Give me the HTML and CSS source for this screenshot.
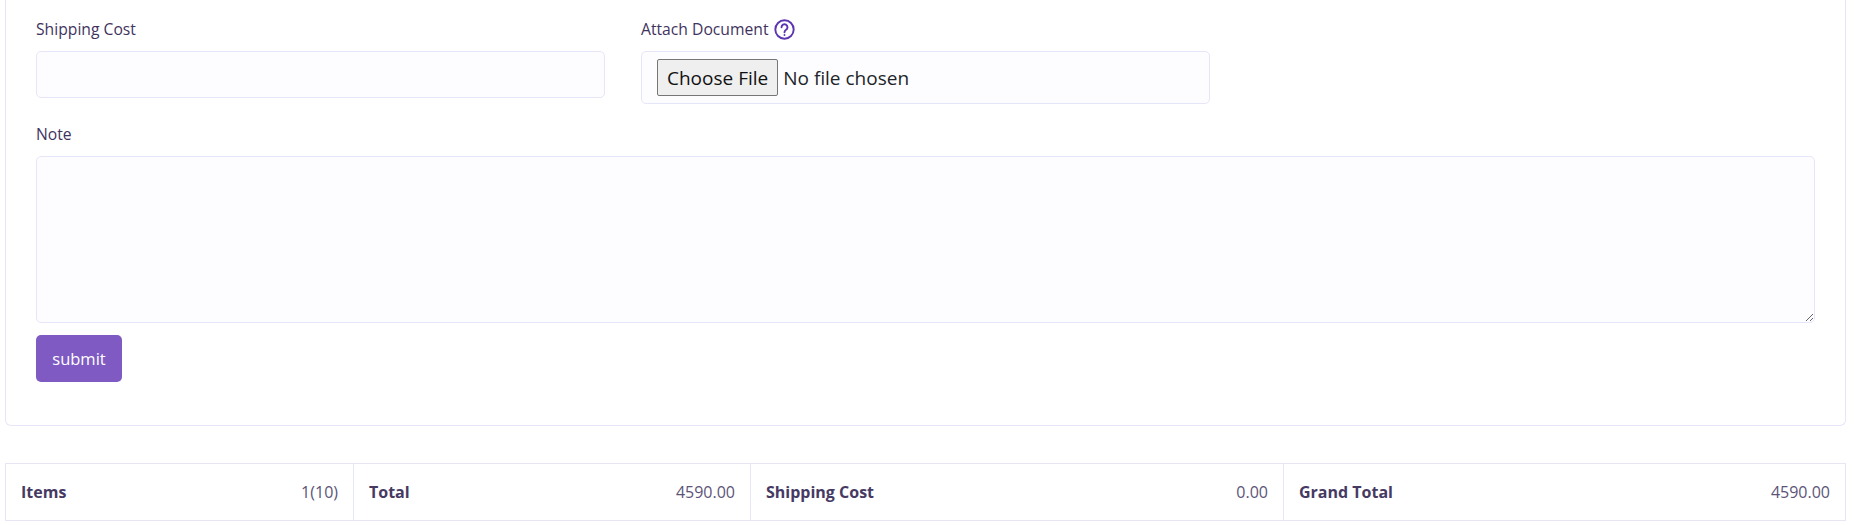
FILE: index.html
```html
<!DOCTYPE html>
<html lang="en">
<head>
<meta charset="UTF-8">
<title>Purchase</title>
<link rel="stylesheet" href="styles.css">
</head>
<body>
  <form class="card">
    <div class="field-row">
      <div class="field">
        <label class="field-label">Shipping Cost</label>
        <input type="text" class="control">
      </div>
      <div class="field">
        <label class="field-label">Attach Document
          <svg class="help-icon" viewBox="0 0 24 24" fill="none" stroke="currentColor" stroke-width="2.2" stroke-linecap="round">
            <circle cx="12" cy="12" r="10.5"/>
            <path d="M8.6 9.4a3.4 3.4 0 1 1 5.2 2.9c-1.2.8-1.8 1.5-1.8 2.9"/>
            <path d="M12 18.2v.1"/>
          </svg>
        </label>
        <div class="file-box"><input type="file" class="file-input"></div>
      </div>
    </div>
    <div class="field">
      <label class="field-label">Note</label>
      <textarea class="control note"></textarea>
    </div>
    <button type="button" class="submit-btn">submit</button>
  </form>

  <div class="totals">
    <div class="cell cell-items"><strong>Items</strong><span>1(10)</span></div>
    <div class="cell cell-total"><strong>Total</strong><span>4590.00</span></div>
    <div class="cell cell-shipping"><strong>Shipping Cost</strong><span>0.00</span></div>
    <div class="cell cell-grand"><strong>Grand Total</strong><span>4590.00</span></div>
  </div>
</body>
</html>
```

FILE: styles.css
```css
body {
  margin: 0;
  padding: 0 8px 0 5px;
  background-color: #fff;
  font-family: 'Open Sans', 'Noto Sans', sans-serif;
  color: #4b3f6b;
}
.card {
  padding: 19px 30px 43px;
  background-color: #fff;
  border: 1px solid #e6e6f8;
  border-top: none;
  border-radius: 0 0 6px 6px;
}
.field-row {
  display: grid;
  grid-template-columns: repeat(3, 1fr);
  gap: 36px;
}
.field-label {
  display: flex;
  align-items: center;
  gap: 5px;
  height: 20px;
  margin-bottom: 12px;
  font-size: 15.7px;
  font-weight: 500;
  color: #3f3360;
}
.help-icon {
  width: 21px;
  height: 21px;
  color: #5e35b1;
}
.control {
  display: block;
  box-sizing: border-box;
  width: 100%;
  height: 47px;
  background-color: #fdfdff;
  border: 1px solid #e6e6fa;
  border-radius: 5px;
}
.file-box {
  box-sizing: border-box;
  height: 53px;
  padding: 7px 15px;
  background-color: #fdfdff;
  border: 1px solid #e6e6fa;
  border-radius: 5px;
}
.file-input {
  font-family: 'Open Sans', sans-serif;
  font-size: 19px;
  color: #212529;
}
.file-input::file-selector-button {
  height: 37px;
  padding: 0 9px;
  margin-right: 5px;
  background-color: #efefef;
  border: 1px solid #767676;
  border-radius: 2px;
  color: #111;
  font: inherit;
}
.field-row + .field {
  margin-top: 20px;
}
.note {
  height: 167px;
}
.submit-btn {
  display: block;
  width: 86px;
  height: 47px;
  margin-top: 12px;
  padding: 0;
  background-color: #7e5ac2;
  border: none;
  border-radius: 5px;
  color: #fff;
  font-family: inherit;
  font-size: 16.5px;
}
.totals {
  display: flex;
  height: 58px;
  margin-top: 37px;
  box-sizing: border-box;
  border: 1px solid #e6e6f5;
}
.cell {
  display: flex;
  justify-content: space-between;
  align-items: center;
  box-sizing: border-box;
  padding: 0 15px;
  font-size: 16px;
  border-right: 1px solid #e6e6f5;
}
.cell strong {
  font-weight: 700;
  color: #463a63;
}
.cell span {
  color: #5c5478;
}
.cell-items { width: 348px; }
.cell-total { width: 397px; }
.cell-shipping { width: 533px; }
.cell-grand { flex: 1; border-right: none; }
```
